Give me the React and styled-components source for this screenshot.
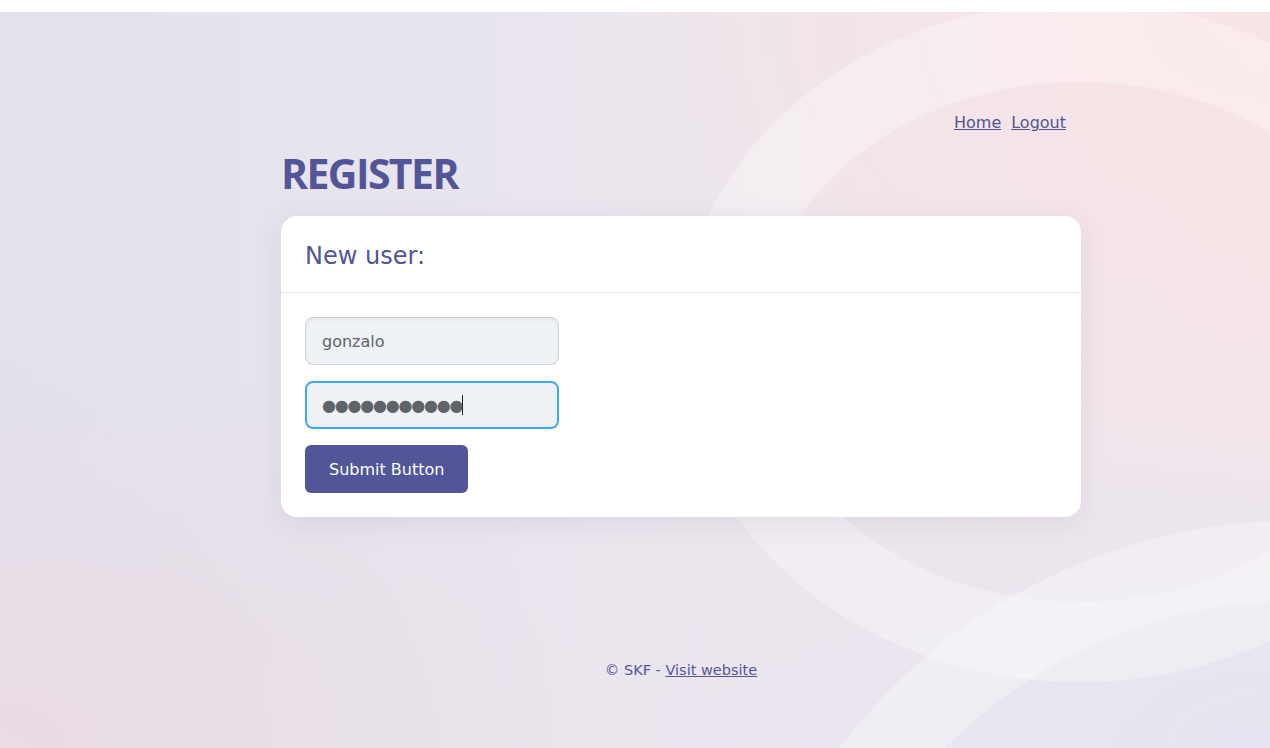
import styled, { createGlobalStyle } from 'styled-components';

const GlobalStyle = createGlobalStyle`
  html, body {
    margin: 0;
    padding: 0;
    font-family: "DejaVu Sans", "Liberation Sans", sans-serif;
  }
  * { box-sizing: border-box; }
`;

function Backdrop() {
  return (
    <Decor viewBox="0 0 1270 736" preserveAspectRatio="none" aria-hidden="true">
      <ellipse cx="1080" cy="330" rx="360" ry="300" fill="none" stroke="#ffffff" strokeOpacity="0.3" strokeWidth="80" />
      <circle cx="1300" cy="1088" r="540" fill="none" stroke="#ffffff" strokeOpacity="0.3" strokeWidth="80" />
    </Decor>
  );
}

export default function App() {
  return (
    <>
      <GlobalStyle />
      <TopStrip />
      <Page>
        <Backdrop />
        <Column>
          <Nav>
            <NavLink href="#">Home</NavLink>
            <NavLink href="#">Logout</NavLink>
          </Nav>
          <Heading>REGISTER</Heading>
          <Card>
            <CardHeader>New user:</CardHeader>
            <CardBody>
              <Field type="text" defaultValue="gonzalo" />
              <FieldWrap>
                <Field type="text" defaultValue="●●●●●●●●●●●" $focused aria-label="password" />
                <Caret />
              </FieldWrap>
              <SubmitButton type="button">Submit Button</SubmitButton>
            </CardBody>
          </Card>
        </Column>
        <Footer>
          © SKF - <FooterLink href="#">Visit website</FooterLink>
        </Footer>
      </Page>
    </>
  );
}

const TopStrip = styled.div`
  height: 12px;
  background: #ffffff;
`;

const Page = styled.main`
  position: relative;
  overflow: hidden;
  height: 736px;
  padding-left: 92px;
  display: flex;
  flex-direction: column;
  align-items: center;
  background:
    radial-gradient(ellipse 700px 500px at 100% 0%, #f8e3e5 0%, rgba(248,227,229,0) 100%),
    radial-gradient(ellipse 600px 400px at 0% 100%, #eadbe4 0%, rgba(234,219,228,0) 100%),
    radial-gradient(ellipse 700px 400px at 100% 100%, #e4e5f1 0%, rgba(228,229,241,0) 100%),
    linear-gradient(90deg, #e2e1ec 0%, #ebe6ee 50%, #f4e6ea 100%);
`;

const Decor = styled.svg`
  position: absolute;
  inset: 0;
  width: 100%;
  height: 100%;
  pointer-events: none;
`;

const Column = styled.div`
  position: relative;
  width: 800px;
  padding-top: 101px;
  display: flex;
  flex-direction: column;
`;

const Nav = styled.nav`
  display: flex;
  justify-content: flex-end;
  gap: 10px;
  padding-right: 15px;
  line-height: 20px;
`;

const NavLink = styled.a`
  color: #525597;
  font-size: 16px;
  text-decoration: underline;
`;

const Heading = styled.h1`
  margin: 20px 0 23px;
  font-family: "Open Sans", "DejaVu Sans Condensed", sans-serif;
  font-weight: 700;
  font-size: 41px;
  letter-spacing: -1.6px;
  line-height: 40px;
  color: #525597;
`;

const Card = styled.section`
  background: #ffffff;
  border-radius: 16px;
  box-shadow: 0 6px 28px rgba(90, 80, 120, 0.1);
`;

const CardHeader = styled.h2`
  margin: 0;
  height: 77px;
  padding: 4px 24px 0;
  display: flex;
  align-items: center;
  font-size: 24px;
  font-weight: 400;
  color: #525597;
  border-bottom: 1px solid #e6e6ea;
`;

const CardBody = styled.form`
  padding: 24px;
  display: flex;
  flex-direction: column;
  align-items: flex-start;
  gap: 16px;
`;

const FieldWrap = styled.div`
  position: relative;
`;

const Field = styled.input`
  display: block;
  width: 254px;
  height: 48px;
  padding: 0 ${p => (p.$focused ? 15 : 16)}px;
  font-family: "DejaVu Sans", sans-serif;
  font-size: 16px;
  letter-spacing: ${p => (p.$focused ? '-1.2px' : 'normal')};
  color: #606468;
  background: #eef2f6;
  border: ${p => (p.$focused ? '2px solid #3ea8f8' : '1px solid #cfd1d4')};
  border-radius: 8px;
  box-shadow: ${p => (p.$focused ? 'none' : 'inset 0 2px 3px rgba(0,0,0,0.05)')};
  outline: none;
`;

const Caret = styled.span`
  position: absolute;
  left: 157px;
  top: 14px;
  width: 1px;
  height: 20px;
  background: #222;
`;

const SubmitButton = styled.button`
  height: 48px;
  padding: 0 24px;
  font-family: "DejaVu Sans", sans-serif;
  font-size: 16px;
  color: #ffffff;
  background: #525597;
  border: none;
  border-radius: 6px;
`;

const Footer = styled.footer`
  position: relative;
  margin-top: 145px;
  font-size: 14.5px;
  color: #525597;
`;

const FooterLink = styled.a`
  color: #525597;
  text-decoration: underline;
`;
